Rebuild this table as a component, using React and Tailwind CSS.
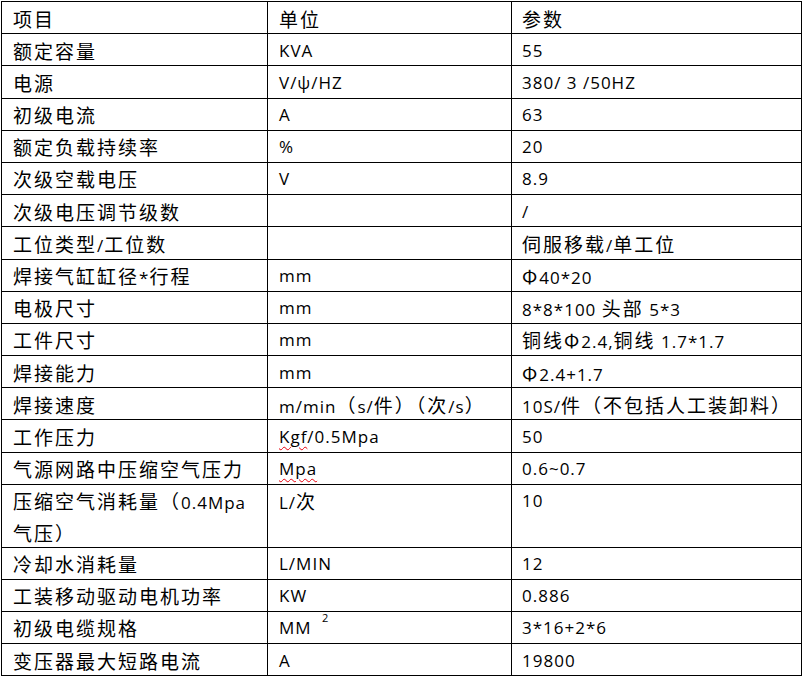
import React from "react";

const CJK = /([\u2E80-\u9FFF\uFF00-\uFFEF\u3000-\u303F\u03A6]+)/;

function T({ s }) {
  const parts = s.split(CJK);
  return parts.map((p, i) =>
    p === "" ? null : CJK.test(p) ? (
      <span key={i} className="font-['Noto_Sans_CJK_SC',sans-serif] text-[19px] tracking-[2px]">
        {p}
      </span>
    ) : (
      <span key={i}>{p}</span>
    )
  );
}

function Squiggle({ children }) {
  return (
    <span className="underline decoration-wavy decoration-red-600 decoration-[1px] underline-offset-[3px]">
      {children}
    </span>
  );
}

const rows = [
  ["项目", "单位", "参数"],
  ["额定容量", "KVA", "55"],
  ["电源", "V/ψ/HZ", "380/ 3 /50HZ"],
  ["初级电流", "A", "63"],
  ["额定负载持续率", "%", "20"],
  ["次级空载电压", "V", "8.9"],
  ["次级电压调节级数", "", "/"],
  ["工位类型/工位数", "", "伺服移载/单工位"],
  ["焊接气缸缸径*行程", "mm", "Φ40*20"],
  ["电极尺寸", "mm", "8*8*100 头部 5*3"],
  ["工件尺寸", "mm", "铜线Φ2.4,铜线 1.7*1.7"],
  ["焊接能力", "mm", "Φ2.4+1.7"],
  ["焊接速度", "m/min（s/件）（次/s）", "10S/件（不包括人工装卸料）"],
  ["工作压力", "KGF", "50"],
  ["气源网路中压缩空气压力", "MPA", "0.6~0.7"],
  ["TALL", "L/次", "10"],
  ["冷却水消耗量", "L/MIN", "12"],
  ["工装移动驱动电机功率", "KW", "0.886"],
  ["初级电缆规格", "MM2", "3*16+2*6"],
  ["变压器最大短路电流", "A", "19800"],
];

function Cell({ v }) {
  if (v === "TALL")
    return (
      <>
        <T s="压缩空气消耗量（0.4Mpa" />
        <br />
        <T s="气压）" />
      </>
    );
  if (v === "KGF")
    return (
      <>
        <Squiggle>Kgf</Squiggle>/0.5Mpa
      </>
    );
  if (v === "MPA") return <Squiggle>Mpa</Squiggle>;
  if (v === "MM2")
    return (
      <>
        MM <sup className="text-[11px] align-[7px] ml-[5px]">2</sup>
      </>
    );
  return <T s={v} />;
}

export default function App() {
  return (
    <div className="w-[804px] h-[679px] bg-white pt-[1px] pl-[1px]">
      <div className="flex flex-col w-[801px] border-l border-t border-black text-black font-['Open_Sans','Noto_Sans_CJK_SC',sans-serif] text-[17px] tracking-[1px]">
        {rows.map((r, i) => {
          const h = r[0] === "TALL" ? "h-[62.7px]" : "h-[32.2px]";
          return (
            <div key={i} className={`flex ${h}`}>
              <div className="w-[266px] shrink-0 border-r border-b border-black pl-[11px] pt-[1.5px] leading-[30px] whitespace-nowrap">
                <Cell v={r[0]} />
              </div>
              <div className="w-[244px] shrink-0 border-r border-b border-black pl-[11px] pt-[1.5px] leading-[30px] whitespace-nowrap">
                <Cell v={r[1]} />
              </div>
              <div className="w-[290px] shrink-0 border-r border-b border-black pl-[10px] pt-[1.5px] leading-[30px] whitespace-nowrap">
                <Cell v={r[2]} />
              </div>
            </div>
          );
        })}
      </div>
    </div>
  );
}
